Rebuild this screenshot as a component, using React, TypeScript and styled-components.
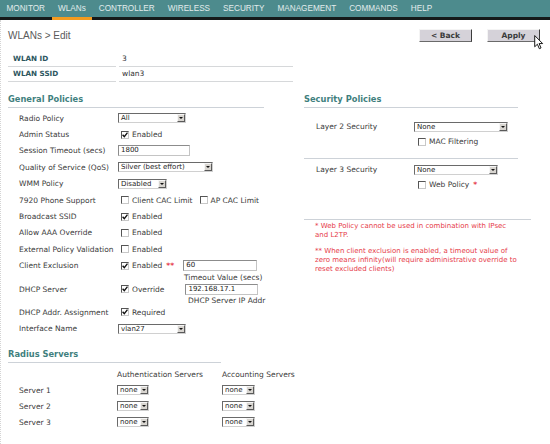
import React from 'react';
import styled, { createGlobalStyle } from 'styled-components';

const GlobalStyle = createGlobalStyle`
  html, body { margin: 0; padding: 0; background: #fff; }
  body {
    font-family: "DejaVu Sans", Verdana, sans-serif;
    font-size: 7.5px;
    color: #3a3a3a;
  }
`;

const Page = styled.div`
  width: 550px;
  height: 444px;
  overflow: hidden;
  background: #fff;
`;

const NavBar = styled.nav`
  display: flex;
  height: 17px;
  background: #4d8b8d;
  border-bottom: 3px solid #151a1a;
  font-family: "Liberation Sans", Arial, sans-serif;
  font-size: 8.2px;
`;

const NavItem = styled.div<{ $active?: boolean }>`
  position: relative;
  padding: 0 6.5px;
  line-height: 18px;
  color: #e2ecec;
  &::after {
    content: '';
    display: ${(p) => (p.$active ? 'block' : 'none')};
    position: absolute;
    left: 0;
    right: 0;
    bottom: -3px;
    height: 3px;
    background: #f39b1f;
  }
`;

const Main = styled.div`
  padding: 0 0 0 7px;
  border-left: 1px dotted #d4d4d4;
  height: 424px;
  box-sizing: border-box;
`;

const TitleBar = styled.div`
  display: flex;
  align-items: center;
  justify-content: space-between;
  padding: 9px 10px 0 0;
  height: 13px;
`;

const PageTitle = styled.div`
  font-family: "Liberation Sans", Arial, sans-serif;
  font-size: 10px;
  color: #5a5a5a;
`;

const ButtonGroup = styled.div`
  display: flex;
  gap: 15px;
`;

const Button = styled.div`
  position: relative;
  width: 53px;
  height: 13px;
  box-sizing: border-box;
  background: #d5d2d9;
  border: 1px solid;
  border-color: #f4f4f4 #3c3c3c #6a6a6a #f4f4f4;
  font-weight: bold;
  font-size: 7.5px;
  color: #3a3a3a;
  text-align: center;
  line-height: 11px;
`;

const Cursor = styled.svg`
  position: absolute;
  left: 46px;
  top: 5px;
`;

const IdTable = styled.div`
  display: grid;
  grid-template-columns: 108px 174px;
  column-gap: 3px;
  margin-top: 10px;
`;

const IdLabel = styled.div`
  height: 14px;
  line-height: 14px;
  padding-left: 5px;
  border-bottom: 1px solid #d6d8da;
  font-weight: bold;
  font-size: 7.2px;
  color: #2d5660;
`;

const IdValue = styled.div`
  height: 14px;
  line-height: 14px;
  padding-left: 3px;
  border-bottom: 1px solid #d6d8da;
  color: #333;
`;

const Columns = styled.div`
  display: grid;
  grid-template-columns: 296px 1fr;
`;

const Column = styled.div`
  display: flex;
  flex-direction: column;
`;

const Heading = styled.div<{ $w: number }>`
  width: ${(p) => p.$w}px;
  padding: 12px 0 3px;
  line-height: 10px;
  font-weight: bold;
  font-size: 8.3px;
  color: #3f7f7e;
  border-bottom: 1px solid #cdd2d8;
`;

const FormList = styled.div<{ $top: number }>`
  margin-top: ${(p) => p.$top}px;
`;

const Row = styled.div<{ $h?: number; $pad?: number; $label?: number }>`
  display: grid;
  grid-template-columns: ${(p) => p.$label ?? 99}px auto;
  grid-template-rows: ${(p) => p.$h ?? 16.4}px;
  align-items: center;
  padding-left: ${(p) => p.$pad ?? 11}px;
`;

const Label = styled.div`
  white-space: nowrap;
  color: #3a3a3a;
`;

const Control = styled.div`
  display: flex;
  align-items: center;
  white-space: nowrap;
`;

const Caption = styled.div<{ $x: number }>`
  grid-column: 2;
  padding-left: ${(p) => p.$x}px;
  line-height: 7px;
  height: 7px;
  color: #3a3a3a;
`;

const SelectBox = styled.div<{ $w: number }>`
  display: flex;
  width: ${(p) => p.$w}px;
  height: 10px;
  box-sizing: border-box;
  background: #fff;
  border: 1px solid;
  border-color: #6a6a6a #d0d0d0 #d0d0d0 #6a6a6a;
`;

const SelectText = styled.span`
  flex: 1;
  padding-left: 2px;
  line-height: 8px;
  font-size: 7px;
  color: #1e1e1e;
  overflow: hidden;
`;

const SelectArrow = styled.span`
  width: 8px;
  box-sizing: border-box;
  background: #d8d5d0;
  border: 1px solid;
  border-color: #f6f6f6 #5a5a5a #5a5a5a #f6f6f6;
  display: flex;
  align-items: center;
  justify-content: center;
  &::before {
    content: '';
    border-left: 2px solid transparent;
    border-right: 2px solid transparent;
    border-top: 2px solid #111;
  }
`;

const TextInput = styled.div<{ $w: number; $ml?: number }>`
  width: ${(p) => p.$w}px;
  height: 11px;
  margin-left: ${(p) => p.$ml ?? 0}px;
  box-sizing: border-box;
  border: 1px solid;
  border-color: #8c8c8c #c4c4c4 #c4c4c4 #8c8c8c;
  background: #fff;
  padding-left: 2px;
  line-height: 9px;
  font-size: 7px;
  color: #222;
`;

const Box = styled.span<{ $ml?: number }>`
  display: inline-flex;
  align-items: center;
  justify-content: center;
  width: 8px;
  height: 8px;
  box-sizing: border-box;
  margin-left: ${(p) => p.$ml ?? 3}px;
  margin-right: 3px;
  background: #fff;
  border: 1px solid;
  border-color: #555 #c8c8c8 #c8c8c8 #555;
`;

const Star = styled.span`
  color: #e63a48;
  font-weight: bold;
  margin-left: 4px;
`;

const Divider = styled.div<{ $w: number; $top: number }>`
  width: ${(p) => p.$w}px;
  margin-top: ${(p) => p.$top}px;
  border-top: 1px solid #cdd2d8;
`;

const Note = styled.div`
  padding: 1.7px 0 0 11px;
  color: #e63a48;
  line-height: 9px;
  font-size: 7px;
  p {
    margin: 0 0 7.3px;
  }
`;

const RadiusGrid = styled.div`
  display: grid;
  grid-template-columns: 98px 105px auto;
  grid-auto-rows: 16px;
  align-items: center;
  padding-left: 11px;
  margin-top: 3px;
`;

const ColHead = styled.div`
  color: #3a3a3a;
  white-space: nowrap;
`;

const Check = ({ on, ml }: { on?: boolean; ml?: number }) => (
  <Box $ml={ml}>
    {on && (
      <svg width="6" height="6" viewBox="0 0 6 6">
        <path d="M0.6 2.8 L2.3 4.7 L5.5 0.6" fill="none" stroke="#111" strokeWidth="1.4" />
      </svg>
    )}
  </Box>
);

const Select = ({ w, value }: { w: number; value: string }) => (
  <SelectBox $w={w}>
    <SelectText>{value}</SelectText>
    <SelectArrow />
  </SelectBox>
);

const navItems = ['MONITOR', 'WLANs', 'CONTROLLER', 'WIRELESS', 'SECURITY', 'MANAGEMENT', 'COMMANDS', 'HELP'];

export default function App() {
  return (
    <Page>
      <GlobalStyle />
      <NavBar>
        {navItems.map((n) => (
          <NavItem key={n} $active={n === 'WLANs'}>
            {n}
          </NavItem>
        ))}
      </NavBar>
      <Main>
        <TitleBar>
          <PageTitle>WLANs &gt; Edit</PageTitle>
          <ButtonGroup>
            <Button>&lt; Back</Button>
            <Button>
              Apply
              <Cursor width="10" height="15" viewBox="0 0 9 14">
                <path d="M0.5 0.5 L0.5 11 L3 8.6 L4.8 12.8 L6.4 12.1 L4.6 8 L7.9 8 Z" fill="#fff" stroke="#111" strokeWidth="0.9" />
              </Cursor>
            </Button>
          </ButtonGroup>
        </TitleBar>

        <IdTable>
          <IdLabel>WLAN ID</IdLabel>
          <IdValue>3</IdValue>
          <IdLabel>WLAN SSID</IdLabel>
          <IdValue>wlan3</IdValue>
        </IdTable>

        <Columns>
          <Column>
            <Heading $w={256}>General Policies</Heading>
            <FormList $top={2}>
              <Row>
                <Label>Radio Policy</Label>
                <Control><Select w={68} value="All" /></Control>
              </Row>
              <Row>
                <Label>Admin Status</Label>
                <Control><Check on />Enabled</Control>
              </Row>
              <Row>
                <Label>Session Timeout (secs)</Label>
                <Control><TextInput $w={72}>1800</TextInput></Control>
              </Row>
              <Row>
                <Label>Quality of Service (QoS)</Label>
                <Control><Select w={95} value="Silver (best effort)" /></Control>
              </Row>
              <Row>
                <Label>WMM Policy</Label>
                <Control><Select w={49} value="Disabled" /></Control>
              </Row>
              <Row>
                <Label>7920 Phone Support</Label>
                <Control>
                  <Check />Client CAC Limit
                  <Check ml={7} />AP CAC Limit
                </Control>
              </Row>
              <Row>
                <Label>Broadcast SSID</Label>
                <Control><Check on />Enabled</Control>
              </Row>
              <Row>
                <Label>Allow AAA Override</Label>
                <Control><Check />Enabled</Control>
              </Row>
              <Row>
                <Label>External Policy Validation</Label>
                <Control><Check />Enabled</Control>
              </Row>
              <Row>
                <Label>Client Exclusion</Label>
                <Control>
                  <Check on />Enabled<Star>**</Star>
                  <TextInput $w={74} $ml={9}>60</TextInput>
                </Control>
                <Caption $x={66}>Timeout Value (secs)</Caption>
              </Row>
              <Row>
                <Label>DHCP Server</Label>
                <Control>
                  <Check on />Override
                  <TextInput $w={73} $ml={21}>192.168.17.1</TextInput>
                </Control>
                <Caption $x={70}>DHCP Server IP Addr</Caption>
              </Row>
              <Row>
                <Label>DHCP Addr. Assignment</Label>
                <Control><Check on />Required</Control>
              </Row>
              <Row>
                <Label>Interface Name</Label>
                <Control><Select w={68} value="vlan27" /></Control>
              </Row>
            </FormList>

            <Heading $w={213}>Radius Servers</Heading>
            <RadiusGrid>
              <span />
              <ColHead>Authentication Servers</ColHead>
              <ColHead>Accounting Servers</ColHead>
              {['Server 1', 'Server 2', 'Server 3'].map((s) => (
                <React.Fragment key={s}>
                  <Label>{s}</Label>
                  <Control><Select w={32} value="none" /></Control>
                  <Control><Select w={33} value="none" /></Control>
                </React.Fragment>
              ))}
            </RadiusGrid>
          </Column>

          <Column>
            <Heading $w={214}>Security Policies</Heading>
            <FormList $top={10.7}>
              <Row $h={16} $pad={12} $label={98}>
                <Label>Layer 2 Security</Label>
                <Control><Select w={94} value="None" /></Control>
              </Row>
              <Row $h={14} $pad={12} $label={98}>
                <span />
                <Control><Check ml={4} />MAC Filtering</Control>
              </Row>
            </FormList>
            <Divider $w={214} $top={9} />
            <FormList $top={3.3}>
              <Row $h={16} $pad={12} $label={98}>
                <Label>Layer 3 Security</Label>
                <Control><Select w={84} value="None" /></Control>
              </Row>
              <Row $h={14} $pad={12} $label={98}>
                <span />
                <Control><Check ml={4} />Web Policy<Star>*</Star></Control>
              </Row>
            </FormList>
            <Divider $w={227} $top={27.5} />
            <Note>
              <p>* Web Policy cannot be used in combination with IPsec<br />and L2TP.</p>
              <p>
                ** When client exclusion is enabled, a timeout value of<br />
                zero means infinity(will require administrative override to<br />
                reset excluded clients)
              </p>
            </Note>
          </Column>
        </Columns>
      </Main>
    </Page>
  );
}
